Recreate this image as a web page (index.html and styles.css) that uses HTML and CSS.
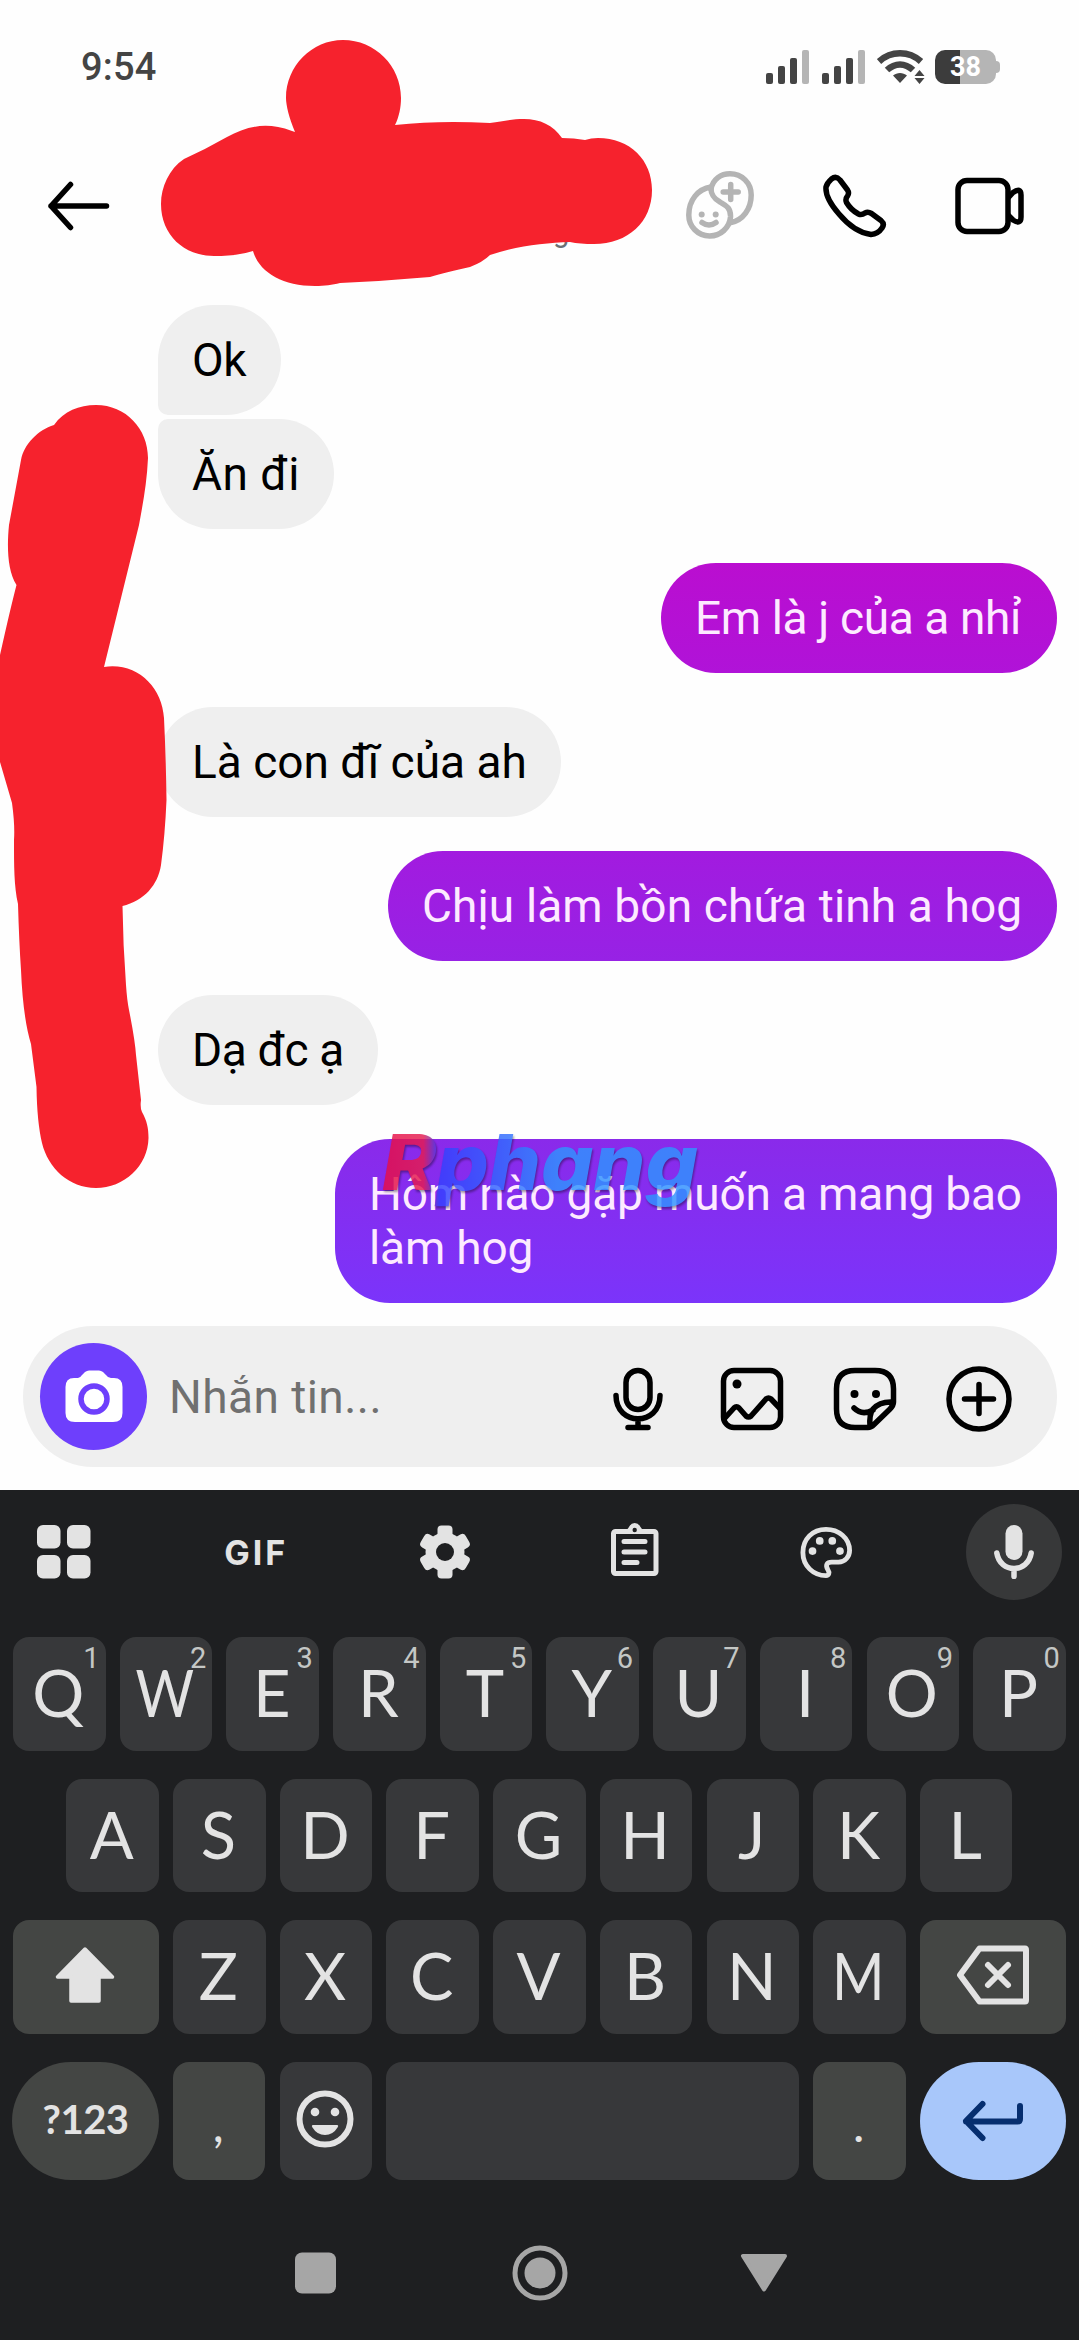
FILE: index.html
```html
<!DOCTYPE html>
<html lang="vi">
<head>
<meta charset="utf-8">
<title>Tin nhắn</title>
<link rel="stylesheet" href="styles.css">
</head>
<body>
<div class="screen">
  <div class="status">
    <span class="clock">9:54</span>
    <div class="indicators">
      <svg class="signal" width="44" height="34" viewBox="0 0 44 34"><g fill="#444"><rect y="23" width="7" height="11" rx="2"/><rect x="12" y="16" width="7" height="18" rx="2"/><rect x="24" y="8" width="7" height="26" rx="2"/></g><rect x="36" width="7" height="34" rx="2" fill="#b5b5b5"/></svg>
      <svg class="signal" width="44" height="34" viewBox="0 0 44 34"><g fill="#444"><rect y="23" width="7" height="11" rx="2"/><rect x="12" y="16" width="7" height="18" rx="2"/><rect x="24" y="8" width="7" height="26" rx="2"/></g><rect x="36" width="7" height="34" rx="2" fill="#b5b5b5"/></svg>
      <svg class="wifi" width="48" height="34" viewBox="0 0 48 34"><g fill="none" stroke="#444" stroke-width="6.5"><path d="M2 11.500C14 .5 32 .5 44 11.500"/><path d="M10 20C18 12.500 28 12.500 36 20"/></g><path fill="#444" d="M16 25.500C20 22 26 22 30 25.500L23 33ZM42.500 20l5 6h-10zM42.500 34l5-6h-10z"/></svg>
      <div class="battery"><span>38</span></div>
    </div>
  </div>

  <div class="header">
    <svg width="62" height="50" viewBox="0 0 62 50" fill="none" stroke="#000" stroke-width="5.500" stroke-linecap="round" stroke-linejoin="round"><path d="M58.500 25H3M22.500 3.500L3 25L22.500 46.500"/></svg>
    <span class="presence">g</span>
    <svg class="faces" width="70" height="70" viewBox="0 0 70 70" fill="none" stroke="#b4b4b4" stroke-width="5.500" stroke-linecap="round"><path d="M25 16C12 18 2.800 29 2.800 44A20.800 20.800 0 0 0 23.500 65A20.800 20.800 0 0 0 44.500 46C45 36 39 34 34 31C28 28 24.500 22 25 16"/><path d="M25 18C27 8 35 2.800 44 2.800C56 2.800 65.200 12 65.200 24C65.200 38 57 49 45 51.500"/><path d="M44.700 13.500V28.500M37.200 21H52.200M16 51.500q7 5 14 0"/><g fill="#b4b4b4" stroke="none"><circle cx="15.700" cy="43.500" r="3"/><circle cx="29.700" cy="43.500" r="3"/></g></svg>
    <svg class="phone" width="64" height="64" viewBox="0 0 64 64" fill="none" stroke="#000" stroke-width="5.500" stroke-linejoin="round"><path d="M8.500 5Q13 1.500 17 6L24.500 16Q26.500 19 24.500 22Q22 25 23.500 28.500Q28 36 35.500 40Q38.500 41.500 42 39Q45 37.500 48.500 39.500L58 46.500Q62 50 59 54Q55 60 48 60.500Q31 58 16 40Q2 24 3 13Q4 9 8.500 5Z"/></svg>
    <svg class="video" width="70" height="58" viewBox="0 0 70 58" fill="none" stroke="#000" stroke-width="5.500" stroke-linejoin="round"><rect x="3" y="3.500" width="50" height="51" rx="9"/><path d="M53 21L58 15.500Q66 10 66 18V40Q66 48 58 43L53 38"/></svg>
  </div>

  <div class="chat">
    <div class="bubble in first">Ok</div>
    <div class="bubble in last">Ăn đi</div>
    <div class="bubble out tone-a">Em là j của a nhỉ</div>
    <div class="bubble in long">Là con đĩ của ah</div>
    <div class="bubble out tone-b">Chịu làm bồn chứa tinh a hog</div>
    <div class="bubble in short">Dạ đc ạ</div>
    <div class="bubble out tone-c">Hôm nào gặp muốn a mang bao<br>làm hog</div>
  </div>

  <div class="composer">
    <div class="camera"><svg width="58" height="54" viewBox="0 0 58 54"><path fill="#fff" d="M9 8H13Q15 8 17 5L20 2Q22 .5 24 .5H34Q36 .5 38 2L41 5Q43 8 46 8H49Q57.500 8 57.500 17V43Q57.500 52 48 52H10Q.5 52 .5 43V17Q.5 8 9 8Z"/><circle cx="29" cy="29" r="13" fill="none" stroke="#6e3ffc" stroke-width="5.500"/></svg></div>
    <span class="placeholder">Nhắn tin...</span>
    <div class="tools">
      <svg width="50" height="64" viewBox="0 0 50 64" fill="none" stroke="#000" stroke-width="5.500" stroke-linecap="round"><rect x="13" y="3.500" width="24" height="39" rx="12"/><path d="M3 28.500C3 59.500 47 59.500 47 28.500M25 52V60M15 60.500H35"/></svg>
      <svg width="64" height="64" viewBox="0 0 64 64" fill="none" stroke="#000" stroke-width="5.500" stroke-linejoin="round"><rect x="3.500" y="3.500" width="57" height="57" rx="10.500"/><path d="M4 52L14 41Q16.500 38.500 19 41L26 49Q28.500 51 31 49L46 32Q48.500 30 51 32L60 41.500"/><circle cx="17" cy="17" r="4.500" fill="#000" stroke="none"/></svg>
      <svg width="64" height="64" viewBox="0 0 64 64" fill="none" stroke="#000" stroke-width="5.500" stroke-linejoin="round" stroke-linecap="round"><path d="M60.500 35V22Q60.500 3.500 42 3.500H22Q3.500 3.500 3.500 22V42Q3.500 60.500 22 60.500H35Q38 60.500 41 57.500L57 42Q60.500 38.500 60.500 35Q47 34 40 42Q36 47 37 60M40 43Q29 49 21 41"/><g fill="#000" stroke="none"><circle cx="21.500" cy="27" r="4"/><circle cx="43" cy="27" r="4"/></g></svg>
      <svg width="66" height="66" viewBox="0 0 66 66" fill="none" stroke="#000" stroke-width="5.500" stroke-linecap="round"><circle cx="33" cy="33" r="30"/><path d="M33 18.500V47.500M18.500 33H47.500"/></svg>
    </div>
  </div>

  <div class="keyboard">
    <div class="toolbar">
      <div class="slot"><svg width="54" height="54" viewBox="0 0 54 54" fill="#e3e3e3"><rect width="23.500" height="23.500" rx="6"/><rect x="30" width="23.500" height="23.500" rx="6"/><rect y="30" width="23.500" height="23.500" rx="6"/><rect x="30" y="30" width="23.500" height="23.500" rx="6"/></svg></div>
      <div class="slot gif">GIF</div>
      <div class="slot"><svg width="54" height="54" viewBox="-27 -27 54 54"><g fill="#e3e3e3"><circle r="19.500"/><rect x="-7.500" y="-26.500" width="15" height="53" rx="4"/><rect x="-7.500" y="-26" width="15" height="52" rx="4" transform="rotate(60)"/><rect x="-7.500" y="-26" width="15" height="52" rx="4" transform="rotate(-60)"/></g><circle r="9" fill="#1e1f21"/></svg></div>
      <div class="slot"><svg class="lift" width="48" height="54" viewBox="0 0 48 54" fill="none" stroke="#e3e3e3" stroke-width="5" stroke-linecap="round" stroke-linejoin="round"><rect x="2.500" y="8.500" width="42.500" height="42" rx="2"/><path d="M13 18.500H34M13 29H34M13 39.500H26"/><path fill="#e3e3e3" stroke="none" d="M15 7Q17 6 18 4Q20 0 23.700 0Q27.500 0 29.500 4Q30.500 6 32.500 7V10H15Z"/><circle cx="23.700" cy="7" r="2.200" fill="#1e1f21" stroke="none"/></svg></div>
      <div class="slot"><svg width="52" height="53" viewBox="0 0 54 54" fill="none" stroke="#e3e3e3" stroke-width="5" stroke-linejoin="round"><path d="M27 3C13 3 3 13 3 27C3 41 14 51 27 51C30 51 31 48 29 45C26 40 28 37 33 37H40C47 37 51.500 31 51.500 25C51.500 12 40 3 27 3Z"/><g fill="#e3e3e3" stroke="none"><circle cx="13" cy="25.500" r="4"/><circle cx="20.500" cy="15" r="4"/><circle cx="33.500" cy="15" r="4"/><circle cx="41.500" cy="25.500" r="4"/></g></svg></div>
      <div class="voice"><svg width="40" height="54" viewBox="0 0 40 54"><rect x="11.500" width="17" height="35" rx="8.500" fill="#e3e3e3"/><path d="M2.800 28C6 48.500 34 48.500 37.200 28M20 44V51.500" fill="none" stroke="#e3e3e3" stroke-width="5.500" stroke-linecap="round"/></svg></div>
    </div>
    <div class="row">
      <div class="key">Q<sup>1</sup></div><div class="key"><b>W</b><sup>2</sup></div><div class="key">E<sup>3</sup></div><div class="key">R<sup>4</sup></div><div class="key">T<sup>5</sup></div><div class="key">Y<sup>6</sup></div><div class="key">U<sup>7</sup></div><div class="key">I<sup>8</sup></div><div class="key">O<sup>9</sup></div><div class="key">P<sup>0</sup></div>
    </div>
    <div class="row">
      <div class="key">A</div><div class="key">S</div><div class="key">D</div><div class="key">F</div><div class="key">G</div><div class="key">H</div><div class="key">J</div><div class="key">K</div><div class="key">L</div>
    </div>
    <div class="row">
      <div class="key wide mod"><svg width="60" height="58" viewBox="0 0 60 58"><path d="M30 3L57.500 31H44V55H16V31H2.500Z" fill="#e3e3e3" stroke="#e3e3e3" stroke-width="3.500" stroke-linejoin="round"/></svg></div>
      <div class="key">Z</div><div class="key">X</div><div class="key">C</div><div class="key">V</div><div class="key">B</div><div class="key">N</div><div class="key"><b>M</b></div>
      <div class="key wide mod"><svg width="73" height="60" viewBox="0 0 73 60" fill="none" stroke="#e3e3e3" stroke-width="6" stroke-linecap="round" stroke-linejoin="round"><path d="M23.500 3.500H69Q70 3.500 70 5V55Q70 56.500 69 56.500H23.500L4 30Z"/><path d="M32 20L52 40M52 20L32 40"/></svg></div>
    </div>
    <div class="row tall">
      <div class="key wide mod round label">?123</div>
      <div class="key mod punct">,</div>
      <div class="key"><svg width="58" height="58" viewBox="0 0 58 58"><circle cx="29" cy="29" r="25.500" fill="none" stroke="#e3e3e3" stroke-width="6"/><g fill="#e3e3e3"><circle cx="19" cy="22" r="4.300"/><circle cx="39" cy="22" r="4.300"/><path d="M17 35H41Q43 35 41.500 37.500Q37 45 29 45Q21 45 16.500 37.500Q15 35 17 35Z"/></g></svg></div>
      <div class="key space"></div>
      <div class="key mod punct">.</div>
      <div class="key wide round enter"><svg width="62" height="42" viewBox="0 0 62 42" fill="none" stroke="#062e6f" stroke-width="6" stroke-linecap="round" stroke-linejoin="round"><path d="M58 6V19Q58 21.500 55.500 21.500H4M20.500 4L4 21L20.500 38"/></svg></div>
    </div>
    <div class="sysnav">
      <svg width="42" height="42"><rect width="41" height="41" y=".5" rx="7" fill="#a6a6a6"/></svg>
      <svg width="56" height="56" viewBox="0 0 56 56"><circle cx="28" cy="28" r="25" fill="none" stroke="#a6a6a6" stroke-width="5"/><circle cx="28" cy="28" r="15.500" fill="#a6a6a6"/></svg>
      <svg width="48" height="40" viewBox="0 0 48 40"><path d="M3 3H45L24 36.500Z" fill="#a6a6a6" stroke="#a6a6a6" stroke-width="4" stroke-linejoin="round"/></svg>
    </div>
  </div>

  <svg class="overlay" width="1079" height="2340" viewBox="0 0 1079 2340">
    <defs>
      <linearGradient id="brand" gradientUnits="userSpaceOnUse" x1="382" y1="0" x2="700" y2="0"><stop offset="0" stop-color="#e80c45"/><stop offset=".13" stop-color="#e51c50"/><stop offset=".18" stop-color="#3440ff"/><stop offset=".3" stop-color="#3358ff"/><stop offset=".55" stop-color="#2f94ff"/><stop offset="1" stop-color="#2f94ff"/></linearGradient>
    </defs>
    <g fill="#f6222d">
      <path d="M295 132C289 118 286 105 286 98C286 66 312 40 343 40C375 40 401 66 401 98C401 107 399 117 395 125Q440 120 490 123C503 121 512 119 524 119C540 119 553 125 562 138Q574 138 585 140Q591 138 598 138C630 138 652 160 652 190C652 222 628 244 594 244Q580 244 570 242C545 243 515 246 490 255Q483 262 470 267C455 270 441 274 430 277Q385 281 340 283C332 285 325 286 315 286C282 286 259 272 253 251Q238 256 214 256C184 256 161 235 161 204C161 187 169 169 184 159Q206 149 227 137C246 127 265 121 292 131Z"/>
      <path d="M54 425C64 411 79 405 96 405C126 405 148 429 148 458C147 482 143 503 139 525Q121 598 104 667C137 662 162 687 164 718Q166 760 166.500 800Q165 835 161 865C158 885 144 901 122.500 906Q123 945 126 985Q127 1000 129 1010Q135 1040 136 1055L141 1100Q140 1108 142 1112C147 1121 148.500 1128 148.500 1138C148 1166 124 1188 96 1188C69 1188 48 1168 42 1143Q37 1122 36.500 1087L31 1044Q23 1018 21 970Q19 940 18 904C14 886 14 866 14 840Q15 825 12 803L0 762V655Q10 610 16.500 585C7 570 7 545 9 525L21 460C24 444 38 430 54 425Z"/>
    </g>
    <text class="watermark" x="382" y="1190" textLength="316" lengthAdjust="spacingAndGlyphs" fill="url(#brand)">Rphang</text>
  </svg>
</div>
</body>
</html>
```
FILE: styles.css
```css
* { box-sizing: border-box; }
body { margin: 0; background: #fefefe; font-family: Roboto, "Noto Sans", sans-serif; color: #000; }
svg { display: block; flex: none; }
.screen { position: relative; width: 1079px; height: 2340px; overflow: hidden; display: flex; flex-direction: column; }

.status { height: 134px; padding: 0 79px 0 81px; display: flex; align-items: center; justify-content: space-between; }
.clock { font-size: 38px; font-weight: 500; color: #444; letter-spacing: 0.2px; }
.indicators { display: flex; align-items: center; }
.signal { margin-right: 12px; }
.wifi { margin: 0 10px 0 -1px; }
.battery { position: relative; width: 61px; height: 34px; border-radius: 10px; background: linear-gradient(90deg, #3c3c3c 25px, #b5b5b5 25px); color: #fff; font-size: 27px; font-weight: 700; line-height: 34px; text-align: center; margin-right: 4px; }
.battery::after { content: ""; position: absolute; left: 61px; top: 11px; width: 4px; height: 12px; border-radius: 0 4px 4px 0; background: #b5b5b5; }

.header { height: 144px; padding: 0 55px 0 48px; display: flex; align-items: center; }
.presence { margin: 51px 0 0 443px; width: 16px; font-size: 29px; color: #6b7075; }
.faces { margin-left: 117px; }
.phone { margin-left: 67px; }
.video { margin-left: 68px; }

.chat { padding: 27px 22px 23px 158px; display: flex; flex-direction: column; gap: 34px; }
.bubble { font-size: 46px; line-height: 54px; padding: 28px 34px; border-radius: 55px; white-space: nowrap; }
.in { align-self: flex-start; background: #efefef; }
.out { align-self: flex-end; color: #fdeaff; }
.first { width: 123px; border-bottom-left-radius: 10px; letter-spacing: -0.5px; }
.last { width: 176px; margin-top: -30px; border-top-left-radius: 10px; letter-spacing: 0.5px; }
.long { width: 403px; }
.short { width: 220px; letter-spacing: -0.4px; }
.tone-a { width: 396px; background: linear-gradient(#ba0ed0, #b013d8); letter-spacing: -0.37px; }
.tone-b { width: 669px; background: linear-gradient(#a21bdf, #9722e5); letter-spacing: 0.13px; }
.tone-c { width: 722px; background: linear-gradient(#8a2aea, #7b34fa); letter-spacing: -0.16px; }

.composer { height: 141px; margin: 0 22px 23px 23px; padding: 0 45px 0 17px; border-radius: 71px; background: #efefef; display: flex; align-items: center; }
.camera { width: 107px; height: 107px; border-radius: 50%; background: #6e3ffc; display: flex; align-items: center; justify-content: center; }
.placeholder { margin-left: 22px; font-size: 46px; letter-spacing: 0.45px; color: #707070; }
.tools { margin-left: auto; padding-top: 4px; display: flex; align-items: center; }
.tools svg:nth-child(2) { margin-left: 57px; }
.tools svg:nth-child(3), .tools svg:nth-child(4) { margin-left: 49px; }

.keyboard { flex: 1; background: #1e1f21; color: #e3e3e3; padding: 14px 12.6px 0 12.4px; display: flex; flex-direction: column; font-family: Lato, Roboto, sans-serif; }
.toolbar { height: 96px; margin-bottom: 37px; padding: 0 4px 0 1px; display: flex; align-items: center; }
.slot { width: 102px; margin-right: 88.3px; display: flex; justify-content: center; }
.slot:nth-last-child(2) { margin-right: 42px; }
.lift { margin-top: -4px; }
.gif { font-family: Inter, sans-serif; font-size: 34px; font-weight: 700; letter-spacing: 3px; padding-left: 3px; }
.voice { width: 96px; height: 96px; border-radius: 50%; background: #373839; margin-left: auto; display: flex; align-items: center; justify-content: center; }

.row { display: flex; gap: 14.2px; height: 113.5px; margin-bottom: 28px; justify-content: center; }
.tall { height: 118px; margin-bottom: 0; }
.key { position: relative; width: 92.5px; border-radius: 16px; background: #37383a; font-size: 65px; padding: 0 2px 3px 0; display: flex; align-items: center; justify-content: center; }
.key b { font-weight: 400; transform: scaleX(0.87); }
.key sup { position: absolute; top: 7px; right: 6px; font-family: Roboto, sans-serif; font-size: 29px; line-height: 29px; color: #c4c7c5; font-weight: 400; }
.wide { width: 146.3px; }
.mod { background: #444644; }
.round { border-radius: 59px; padding: 0; }
.space { flex: 1; }
.label { font-size: 40px; font-weight: 700; padding: 0 0 3px; letter-spacing: -0.5px; }
.punct { font-size: 48px; padding-top: 8px; }
.enter { background: #a8c7fa; }
.sysnav { margin-top: 65px; padding-left: 282.6px; display: flex; align-items: center; gap: 172px; }
.sysnav svg:first-child { margin-right: 3px; }

.overlay { position: absolute; left: 0; top: 0; }
.watermark { font: italic 800 77px Inter, sans-serif; opacity: 0.82; filter: drop-shadow(1px 2px 1px rgba(0,0,0,.45)); }
```
